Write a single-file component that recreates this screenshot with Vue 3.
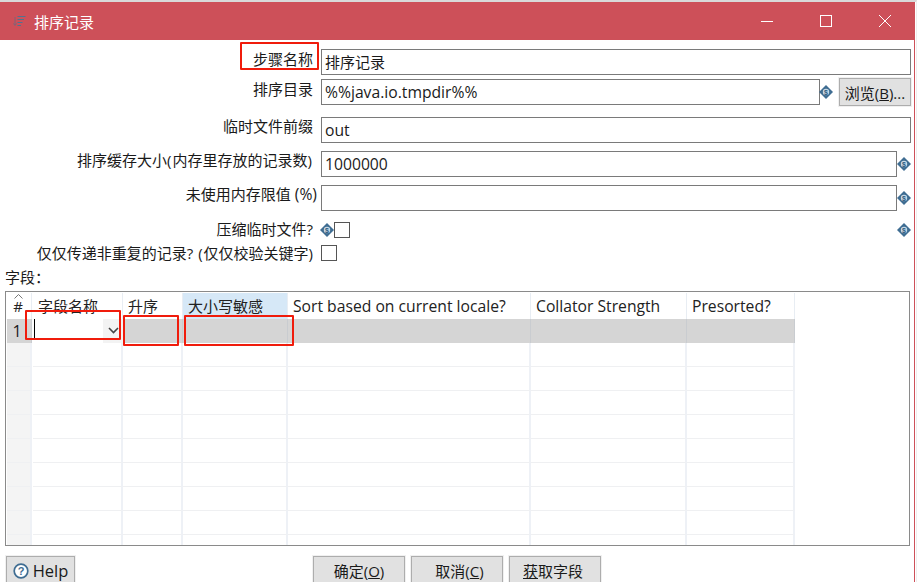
<script setup>
const columns = [
  { title: '#', w: 25, cls: 'h-num' },
  { title: '字段名称', w: 90 },
  { title: '升序', w: 60 },
  { title: '大小写敏感', w: 105, cls: 'h-active' },
  { title: 'Sort based on current locale?', w: 243, cls: 'lat' },
  { title: 'Collator Strength', w: 156, cls: 'lat' },
  { title: 'Presorted?', w: 108, cls: 'lat' },
]
const rows = [1, 2, 3, 4, 5, 6, 7, 8, 9]
</script>

<template>
  <div class="window">
    <header class="titlebar">
      <svg class="app-icon" width="14" height="14" viewBox="0 0 14 14">
        <path d="M3 3v8M1.500 9.500L3 11.500l1.500-2" fill="none" stroke="#7d6478" stroke-width="1" />
        <path d="M5.500 2.500h8M5.500 5.500h6.500M5.500 8.500h5M5.500 11.500h3.500" fill="none" stroke="#4f7391" stroke-width="1" />
      </svg>
      <span class="title">排序记录</span>
      <div class="controls">
        <svg width="14" height="14" viewBox="0 0 14 14"><path d="M1 7.500h12" stroke="#fff" fill="none" /></svg>
        <svg width="14" height="14" viewBox="0 0 14 14"><rect x="1.500" y="1.500" width="11" height="11" stroke="#fff" fill="none" /></svg>
        <svg width="14" height="14" viewBox="0 0 14 14"><path d="M1 1l12 12M13 1L1 13" stroke="#fff" fill="none" /></svg>
      </div>
    </header>

    <main class="body">
      <div class="row r1">
        <label class="label">步骤名称</label>
        <div class="field grow">排序记录</div>
      </div>
      <div class="row r2">
        <label class="label">排序目录</label>
        <div class="field grow lat">%%java.io.tmpdir%%</div>
        <svg class="var" viewBox="0 0 14 14"><path d="M7 0l7 7-7 7-7-7z" fill="#3f6d92" /><circle cx="7" cy="7" r="3.200" fill="#c9d9e5" /><text x="7" y="9.500" class="var-s">$</text></svg>
        <button class="btn browse">浏览(<u>B</u>)...</button>
      </div>
      <div class="row r3">
        <label class="label">临时文件前缀</label>
        <div class="field grow lat">out</div>
      </div>
      <div class="row r4">
        <label class="label">排序缓存大小<span class="par">(</span>内存里存放的记录数<span class="par">)</span></label>
        <div class="field grow lat">1000000</div>
        <svg class="var end" viewBox="0 0 14 14"><path d="M7 0l7 7-7 7-7-7z" fill="#3f6d92" /><circle cx="7" cy="7" r="3.200" fill="#c9d9e5" /><text x="7" y="9.500" class="var-s">$</text></svg>
      </div>
      <div class="row r5">
        <label class="label wide">未使用内存限值 <span class="lat">(%)</span></label>
        <div class="field grow"></div>
        <svg class="var end" viewBox="0 0 14 14"><path d="M7 0l7 7-7 7-7-7z" fill="#3f6d92" /><circle cx="7" cy="7" r="3.200" fill="#c9d9e5" /><text x="7" y="9.500" class="var-s">$</text></svg>
      </div>
      <div class="row r6">
        <label class="label">压缩临时文件?</label>
        <svg class="var tight" viewBox="0 0 14 14"><path d="M7 0l7 7-7 7-7-7z" fill="#3f6d92" /><circle cx="7" cy="7" r="3.200" fill="#c9d9e5" /><text x="7" y="9.500" class="var-s">$</text></svg>
        <span class="check"></span>
        <svg class="var right" viewBox="0 0 14 14"><path d="M7 0l7 7-7 7-7-7z" fill="#3f6d92" /><circle cx="7" cy="7" r="3.200" fill="#c9d9e5" /><text x="7" y="9.500" class="var-s">$</text></svg>
      </div>
      <div class="row r7">
        <label class="label">仅仅传递非重复的记录<span class="par">?</span> <span class="par">(</span>仅仅校验关键字)</label>
        <span class="check"></span>
      </div>

      <div class="section">字段：</div>

      <div class="table">
        <div class="thead">
          <div v-for="c in columns" :key="c.title" class="th" :class="c.cls" :style="{ width: c.w + 'px' }">
            <svg v-if="c.title === '#'" class="sort" width="9" height="5" viewBox="0 0 9 5"><path d="M.5 4.500l4-4 4 4" fill="none" stroke="#777" /></svg>
            {{ c.title }}
          </div>
        </div>
        <div class="tr selected">
          <div class="td num" :style="{ width: columns[0].w + 'px' }">1</div>
          <div class="td editor" :style="{ width: columns[1].w + 'px' }">
            <span class="caret"></span>
            <span class="drop">
              <svg width="11" height="7" viewBox="0 0 11 7"><path d="M1 1l4.500 4.500L10 1" fill="none" stroke="#444" stroke-width="1.600" /></svg>
            </span>
          </div>
          <div v-for="c in columns.slice(2)" :key="c.title" class="td" :style="{ width: c.w + 'px' }"></div>
        </div>
        <div v-for="r in rows" :key="r" class="tr">
          <div v-for="(c, i) in columns" :key="c.title" class="td" :class="{ gutter: i === 0 }" :style="{ width: c.w + 'px' }"></div>
        </div>
        <span class="mark m-name"></span>
        <span class="mark m-asc"></span>
        <span class="mark m-case"></span>
      </div>

      <footer class="footer">
        <button class="btn help">
          <svg width="16" height="16" viewBox="0 0 16 16"><circle cx="8" cy="8" r="6.800" fill="#fff" stroke="#3f6d92" stroke-width="1.700" /><text x="8" y="12" class="q">?</text></svg>
          <span>Help</span>
        </button>
        <div class="actions">
          <button class="btn action">确定(<u>O</u>)</button>
          <button class="btn action shift">取消(<u>C</u>)</button>
          <button class="btn action back"><u>获</u>取字段</button>
        </div>
      </footer>

      <span class="mark m-step"></span>
    </main>
  </div>
</template>

<style scoped>
.window {
  width: 917px;
  height: 582px;
  overflow: hidden;
  position: relative;
  background: #fff;
  font-family: "Open Sans", "Noto Sans CJK SC", sans-serif;
  font-size: 15px;
  color: #1a1a1a;
  border-top: 2px solid #d9d9d9;
  border-right: 1px solid #eee;
  box-sizing: border-box;
}
.lat { font-size: 15.700px; }
.par { letter-spacing: 1px; }
.titlebar {
  height: 38px;
  background: #cd5059;
  color: #fff;
  display: flex;
  align-items: center;
  padding-left: 12px;
  margin-right: 1px;
}
.app-icon { margin-right: 8px; }
.title { font-size: 15px; }
.controls {
  margin-left: auto;
  display: flex;
  gap: 45px;
  padding-right: 23px;
}
.body {
  position: relative;
  height: 542px;
  border-right: 1px solid #cd5059;
  margin-right: 1px;
  box-sizing: border-box;
  padding: 9px 3px 0 0;
}
.row {
  display: flex;
  align-items: center;
  height: 26px;
}
.r2 { margin-top: 4px; }
.r3 { margin-top: 12px; }
.r4 { margin-top: 8px; padding-right: 13px; }
.r5 { margin-top: 8px; padding-right: 13px; }
.r6 { margin-top: 6px; }
.r7 { margin-top: -3px; }
.label {
  width: 313px;
  flex: none;
  text-align: right;
  margin-right: 8px;
  white-space: nowrap;
  line-height: 26px;
  position: relative;
  top: -3px;
}
.r3 .label, .r4 .label, .r5 .label { top: -4px; }
.r6 .label { top: -1px; }
.r7 .label { top: 0; }
.wide { width: 317px; margin-right: 4px; }
.field {
  height: 26px;
  box-sizing: border-box;
  border: 1.500px solid #7a7a7a;
  padding-left: 3px;
  line-height: 25px;
  white-space: nowrap;
}
.grow { flex: 1; min-width: 0; }
.var {
  width: 14px;
  height: 14px;
  flex: none;
}
.var-s {
  font-size: 7px;
  font-weight: 700;
  text-anchor: middle;
  fill: #2f5d82;
  font-family: "Liberation Sans", sans-serif;
}
.r2 .var { margin: 0 11px 0 -1px; }
.end { margin-right: -13px; }
.tight { margin-right: 0; margin-left: -8px; }
.right { margin-left: auto; margin-right: 0; }
.r6 .var.tight { margin-right: 0; margin-left: 0; }
.r6 .label { margin-right: 7px; }
.check {
  width: 16px;
  height: 16px;
  flex: none;
  box-sizing: border-box;
  border: 1px solid #555;
  background: #fff;
}
.section {
  margin-top: 3px;
  margin-left: 5px;
  height: 22px;
  line-height: 16px;
}
.table {
  position: relative;
  width: 905px;
  height: 255px;
  margin-left: 5px;
  box-sizing: border-box;
  border: 1px solid #8a8a8a;
  padding: 1px;
  overflow: hidden;
}
.thead, .tr {
  display: flex;
}
.thead { height: 26px; }
.th {
  flex: none;
  box-sizing: border-box;
  border-right: 1px solid #e8edf3;
  padding-left: 5px;
  line-height: 26px;
  white-space: nowrap;
  position: relative;
  color: #222;
}
.h-num { text-align: center; padding: 0 2px 0 0; }
.h-active { background: #d6e8f7; }
.sort {
  position: absolute;
  left: 7px;
  top: 1px;
}
.tr { height: 24px; }
.td {
  flex: none;
  height: 24px;
  box-sizing: border-box;
  border-right: 2px solid #eef1f6;
  border-bottom: 1px solid #eff0f2;
  position: relative;
}
.td:first-child { margin-right: 1px; }
.th:first-child { margin-right: 1px; }
.gutter { background: #f4f4f4; }
.selected .td {
  background: #d5d5d5;
  border-right: 1px solid #c9ccd0;
  border-bottom: none;
}
.selected .num {
  text-align: center;
  line-height: 25px;
  padding-right: 4px;
  font-size: 16px;
}
.selected .editor { background: #fff; border: none; }
.caret {
  position: absolute;
  left: 1px;
  top: 0;
  width: 1px;
  height: 20px;
  background: #000;
}
.drop {
  position: absolute;
  right: 0;
  top: 0;
  bottom: 0;
  width: 20px;
  background: #f3f3f3;
  display: flex;
  align-items: center;
  justify-content: center;
  padding-bottom: 2px;
  box-sizing: border-box;
}
.btn {
  font: inherit;
  color: #1a1a1a;
  background: #e1e1e1;
  border: 1px solid #adadad;
  outline: 1px solid #f0f0f0;
  padding: 1px 0 0;
  white-space: nowrap;
}
.browse {
  width: 72px;
  height: 28px;
  flex: none;
  margin-left: -5px;
}
.footer {
  display: flex;
  margin: 10px 0 0 6px;
}
.help {
  width: 69px;
  height: 28px;
  display: flex;
  align-items: center;
  justify-content: center;
  gap: 4px;
  font-size: 16.500px;
}
.q {
  font-size: 11px;
  font-weight: 700;
  text-anchor: middle;
  fill: #3f6d92;
  font-family: "Liberation Sans", sans-serif;
}
.actions {
  display: flex;
  gap: 6px;
  margin-left: 238px;
}
.action {
  width: 92px;
  height: 28px;
}
.shift { padding-left: 5px; }
.back { padding-right: 4px; }
.mark {
  position: absolute;
  border: 2px solid #f01c0c;
  box-sizing: border-box;
  border-radius: 1px;
  pointer-events: none;
}
.m-step { left: 240px; top: 2px; width: 79px; height: 28px; }
.m-name { left: 19px; top: 18px; width: 96px; height: 30px; }
.m-asc { left: 117px; top: 23px; width: 56px; height: 31px; }
.m-case { left: 178px; top: 23px; width: 110px; height: 31px; }
</style>
